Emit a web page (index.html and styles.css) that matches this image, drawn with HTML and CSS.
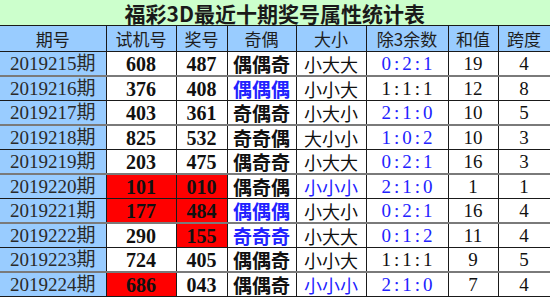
FILE: index.html
```html
<!DOCTYPE html>
<html lang="zh">
<head>
<meta charset="utf-8">
<link rel="stylesheet" href="styles.css">
</head>
<body>
<table class="stats">
  <colgroup>
    <col class="c1"><col class="c2"><col class="c3"><col class="c4"><col class="c5"><col class="c6"><col class="c7"><col class="c8">
  </colgroup>
  <tr class="title"><td colspan="8">福彩3D最近十期奖号属性统计表</td></tr>
  <tr class="head"><td>期号</td><td>试机号</td><td>奖号</td><td>奇偶</td><td>大小</td><td>除3余数</td><td>和值</td><td>跨度</td></tr>
  <tr class="r a"><td class="p">2019215期</td><td class="n">608</td><td class="n">487</td><td class="oe">偶偶奇</td><td class="bs">小大大</td><td class="m blue">0:2:1</td><td class="s">19</td><td class="s">4</td></tr>
  <tr class="r b"><td class="p">2019216期</td><td class="n">376</td><td class="n">408</td><td class="oe blue">偶偶偶</td><td class="bs">小小大</td><td class="m">1:1:1</td><td class="s">12</td><td class="s">8</td></tr>
  <tr class="r a"><td class="p">2019217期</td><td class="n">403</td><td class="n">361</td><td class="oe">奇偶奇</td><td class="bs">小大小</td><td class="m blue">2:1:0</td><td class="s">10</td><td class="s">5</td></tr>
  <tr class="r b"><td class="p">2019218期</td><td class="n">825</td><td class="n">532</td><td class="oe">奇奇偶</td><td class="bs">大小小</td><td class="m blue">1:0:2</td><td class="s">10</td><td class="s">3</td></tr>
  <tr class="r a"><td class="p">2019219期</td><td class="n">203</td><td class="n">475</td><td class="oe">偶奇奇</td><td class="bs">小大大</td><td class="m blue">0:2:1</td><td class="s">16</td><td class="s">3</td></tr>
  <tr class="r b"><td class="p">2019220期</td><td class="n red">101</td><td class="n red">010</td><td class="oe">偶奇偶</td><td class="bs blue">小小小</td><td class="m blue">2:1:0</td><td class="s">1</td><td class="s">1</td></tr>
  <tr class="r a"><td class="p">2019221期</td><td class="n red">177</td><td class="n red">484</td><td class="oe blue">偶偶偶</td><td class="bs">小大小</td><td class="m blue">0:2:1</td><td class="s">16</td><td class="s">4</td></tr>
  <tr class="r b"><td class="p">2019222期</td><td class="n">290</td><td class="n red">155</td><td class="oe blue">奇奇奇</td><td class="bs">小大大</td><td class="m blue">0:1:2</td><td class="s">11</td><td class="s">4</td></tr>
  <tr class="r a"><td class="p">2019223期</td><td class="n">724</td><td class="n">405</td><td class="oe">偶偶奇</td><td class="bs">小小大</td><td class="m">1:1:1</td><td class="s">9</td><td class="s">5</td></tr>
  <tr class="r b"><td class="p">2019224期</td><td class="n red">686</td><td class="n">043</td><td class="oe">偶偶奇</td><td class="bs blue">小小小</td><td class="m blue">2:1:0</td><td class="s">7</td><td class="s">4</td></tr>
</table>
</body>
</html>
```
FILE: styles.css
```css
html, body {
  margin: 0;
  padding: 0;
  background: #ffffff;
}
.stats {
  width: 550px;
  table-layout: fixed;
  border-collapse: collapse;
  font-family: "Liberation Serif", "Noto Sans CJK SC", serif;
  color: #111;
}
.c1 { width: 106px; }
.c2 { width: 70px; }
.c3 { width: 51px; }
.c4 { width: 69px; }
.c5 { width: 70px; }
.c6 { width: 82px; }
.c7 { width: 50px; }
.c8 { width: 52px; }
.stats td {
  border: 1px solid #1a1a1a;
  padding: 0;
  text-align: center;
  vertical-align: middle;
  white-space: nowrap;
  line-height: 20px;
}
.stats tr td:first-child { border-left: none; }
.title td {
  border-top: none;
  height: 25px;
  background: #ccffcc;
  font-family: "Noto Sans CJK SC", sans-serif;
  font-weight: 700;
  font-size: 21px;
  line-height: 24px;
  color: #1a1a1a;
}
.head td {
  height: 25px;
  background: #99ccff;
  font-family: "Noto Sans CJK SC", sans-serif;
  font-size: 17px;
  color: #1e1e1e;
}
.r td { height: 23px; }
.r.a td { border-top: 1px solid #1a1a1a; }
.r.b td { border-top: 2px solid #7a7a7a; }
.p {
  background: #99ccff;
  font-size: 19px;
  color: #2a2a2a;
}
.n {
  font-size: 20px;
  font-weight: 700;
  color: #111;
}
.oe {
  font-family: "Noto Sans CJK SC", sans-serif;
  font-size: 19px;
  font-weight: 700;
  color: #111;
}
.bs {
  font-family: "Noto Sans CJK SC", sans-serif;
  font-size: 18px;
  color: #111;
}
.m {
  font-size: 19px;
  letter-spacing: 3px;
  text-indent: 3px;
}
.s {
  font-size: 19px;
}
.blue { color: #2222ff; }
.red { background: #ff0000; }
```
